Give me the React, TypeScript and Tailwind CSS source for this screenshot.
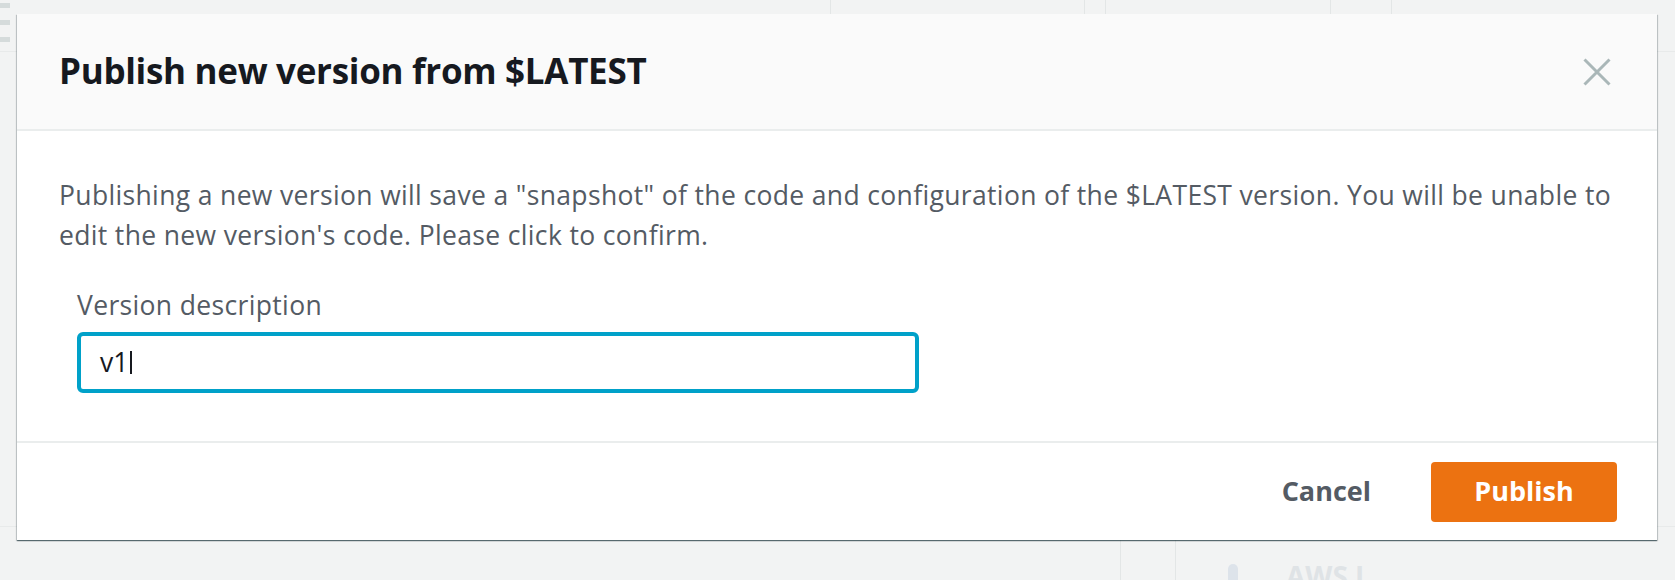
const font = { fontFamily: '"Open Sans", "Noto Sans", Arial, sans-serif' };

function BackgroundPage() {
  return (
    <div className="h-[580px] w-full bg-[#f2f3f3] flex flex-col">
      {/* top strip of the page below */}
      <div className="flex h-[52px] border-b border-[#e8eaea]">
        <div className="w-[10px] flex flex-col gap-[12px] pt-[3px]">
          <div className="h-[5px] bg-[#d5dbdb]" />
          <div className="h-[5px] bg-[#d5dbdb]" />
          <div className="h-[5px] bg-[#d5dbdb]" />
        </div>
        <div className="w-[820px]" />
        <div className="w-[254px] border-l border-[#e3e6e6]" />
        <div className="w-[21px] border-l border-[#e3e6e6]" />
        <div className="w-[225px] border-l border-[#e3e6e6]" />
        <div className="w-[61px] border-l border-[#e3e6e6]" />
        <div className="flex-1 border-l border-[#e3e6e6]" />
      </div>
      <div className="flex-1" />
      <div className="flex h-[54px] border-t border-[#e8eaea]">
        <div className="w-[1120px]" />
        <div className="w-[55px] border-l border-[#e3e6e6]" />
        <div className="flex-1 border-l border-[#e3e6e6] flex items-end gap-[48px] pl-[52px]">
          <div className="w-[10px] h-[16px] bg-[#dde3ea] rounded-t-full" />
          <span className="text-[28px] font-bold text-[#dfe3e6] leading-none translate-y-[10px]" style={font}>
            AWS L
          </span>
        </div>
      </div>
    </div>
  );
}

function CloseIcon() {
  return (
    <svg width="28" height="28" viewBox="0 0 28 28" fill="none" stroke="#aab7b8" strokeWidth="3">
      <path d="M1.5 1.5 L26.5 26.5 M26.5 1.5 L1.5 26.5" />
    </svg>
  );
}

function PublishModal() {
  return (
    <div
      className="absolute left-[17px] top-[14px] w-[1640px] bg-white shadow-[0_1px_1px_0_rgba(0,28,36,0.5),1px_1px_1px_0_rgba(0,28,36,0.15),-1px_1px_1px_0_rgba(0,28,36,0.15)]"
      style={font}
    >
      {/* Header */}
      <div className="h-[117px] bg-[#fafafa] border-b-2 border-[#eaeded] flex items-center justify-between pl-[42px] pr-[46px]">
        <h2 className="text-[35px] font-bold text-[#16191f] tracking-[-0.3px]">
          Publish new version from $LATEST
        </h2>
        <CloseIcon />
      </div>

      {/* Body */}
      <div className="pt-[44px] pb-[48px] pl-[42px] pr-[24px]">
        <p className="text-[26.5px] leading-[40px] tracking-[0.35px] text-[#545b64]">
          Publishing a new version will save a "snapshot" of the code and configuration of the $LATEST version. You
          will be unable to edit the new version's code. Please click to confirm.
        </p>
        <div className="mt-[30px] pl-[18px]">
          <label className="block text-[26.5px] leading-[40px] tracking-[0.35px] text-[#545b64]">
            Version description
          </label>
          <div className="mt-[7px] w-[842px] h-[61px] border-[4px] border-[#00a1c9] rounded-[6px] flex items-center pl-[19px]">
            <span className="text-[26.5px] text-[#16191f]">v1</span>
            <span className="ml-[2px] w-[2px] h-[23px] bg-[#16191f]" />
          </div>
        </div>
      </div>

      {/* Footer */}
      <div className="h-[99px] border-t-2 border-[#eaeded] flex items-center justify-end gap-[30px] pr-[40px]">
        <button className="px-[30px] h-[60px] text-[27px] font-bold text-[#545b64]">Cancel</button>
        <button className="w-[186px] h-[60px] rounded-[4px] bg-[#ec7211] text-[27px] font-bold text-white">
          Publish
        </button>
      </div>
    </div>
  );
}

export default function App() {
  return (
    <div className="relative w-[1675px] h-[580px] overflow-hidden">
      <BackgroundPage />
      <PublishModal />
    </div>
  );
}
